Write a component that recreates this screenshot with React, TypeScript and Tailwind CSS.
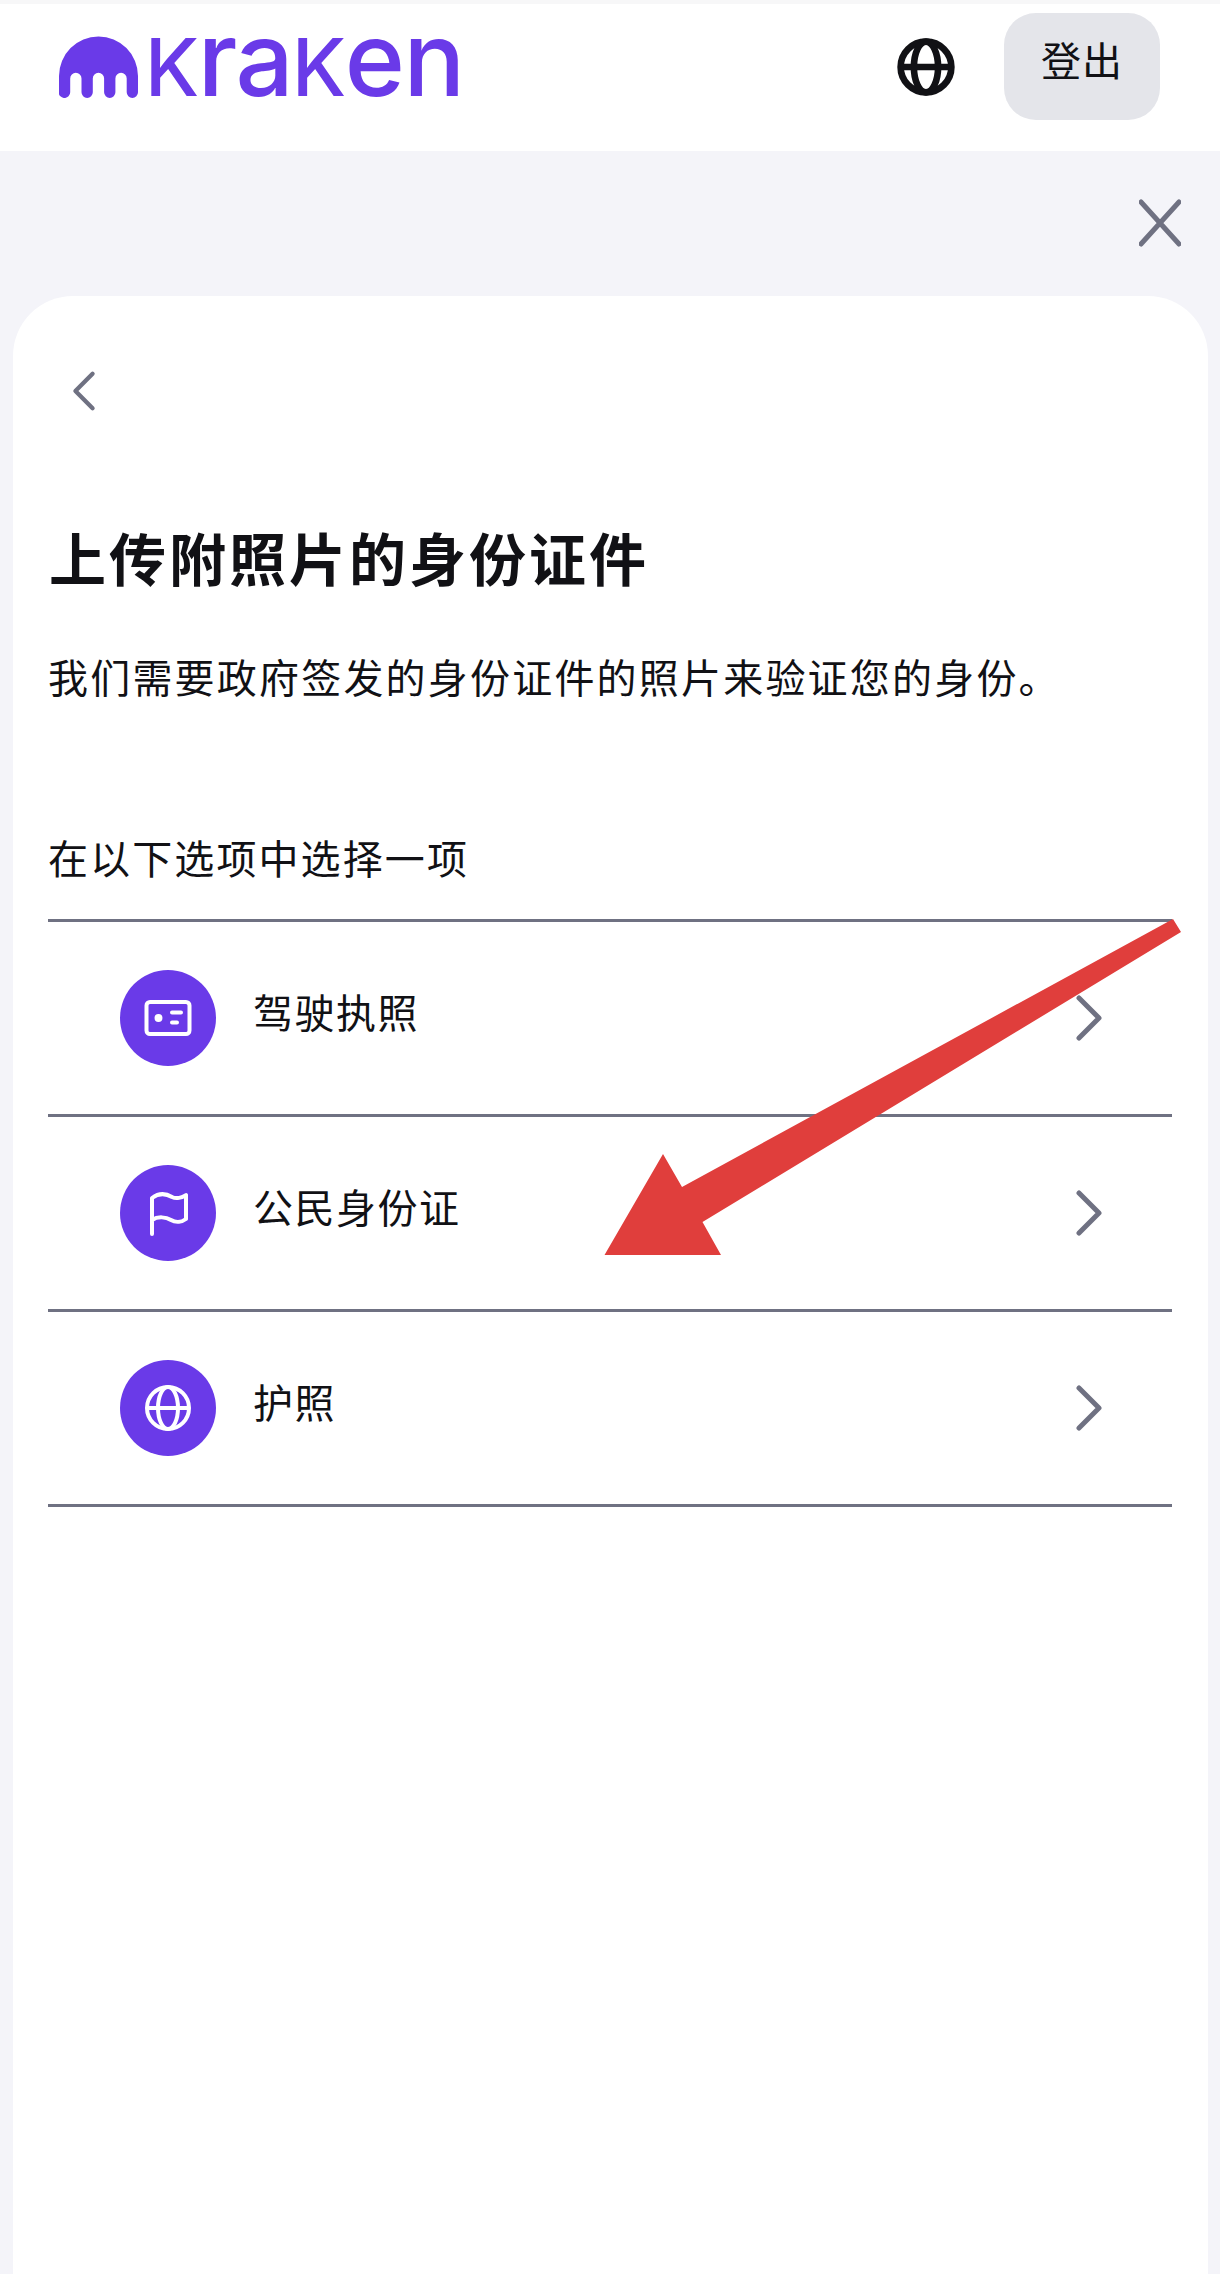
const font = { fontFamily: '"Noto Sans CJK SC", "Noto Sans", sans-serif' };

const Jellyfish = () => (
  <svg viewBox="0 0 79 62" className="w-[79px] h-[62px] shrink-0" fill="#6a3ae8">
    <path d="M0 40a39.5 39.5 0 0 1 79 0v16.3a5.65 5.65 0 0 1-11.3 0V42.5a5.65 5.65 0 0 0-11.3 0v13.8a5.65 5.65 0 0 1-11.3 0V42.5a5.65 5.65 0 0 0-11.3 0v13.8a5.65 5.65 0 0 1-11.3 0V42.5a5.65 5.65 0 0 0-11.3 0v13.8a5.65 5.65 0 0 1-11.5 0z" />
  </svg>
);

const IdIcon = () => (
  <svg viewBox="0 0 96 96" className="w-24 h-24" fill="none" stroke="white" strokeWidth="4" strokeLinecap="round">
    <rect x="26.5" y="32" width="43" height="32" rx="3.5" />
    <circle cx="38.5" cy="48" r="3.2" fill="white" strokeWidth="1.5" />
    <path d="M52 42.5h9M52 52.5h5" strokeWidth="4" />
  </svg>
);

const FlagIcon = () => (
  <svg viewBox="0 0 96 96" className="w-24 h-24" fill="none" stroke="white" strokeWidth="4" strokeLinecap="round" strokeLinejoin="round">
    <path d="M32 69V33C40 27 47 29 52 32C56 34 62 33 66 30V54C62 57 56 58 51 55C46 52 38 51 32 55" />
  </svg>
);

const GlobeIcon = ({ size, color, w }: { size: string; color: string; w: number }) => (
  <svg viewBox="0 0 96 96" className={size} fill="none" stroke={color} strokeWidth={w}>
    <circle cx="48" cy="48" r="21" />
    <ellipse cx="48" cy="48" rx="10" ry="21" />
    <path d="M27 48h42" />
  </svg>
);

const Chevron = () => (
  <svg viewBox="0 0 28 46" className="w-7 h-[46px]" fill="none" stroke="#6f7182" strokeWidth="5" strokeLinecap="round" strokeLinejoin="round">
    <path d="M4 3l20 20L4 43" />
  </svg>
);

const rows = [
  { label: '驾驶执照', icon: <IdIcon /> },
  { label: '公民身份证', icon: <FlagIcon /> },
  { label: '护照', icon: <GlobeIcon size="w-24 h-24" color="white" w={4} /> },
];

export default function App() {
  return (
    <div className="relative min-h-screen bg-[#f4f4f9] flex flex-col text-[#111115]" style={font}>
      {/* Header */}
      <header className="h-[151px] shrink-0 bg-white border-t-4 border-[#f7f7f8] flex items-start pl-[59px] pr-[60px]">
        <div className="flex items-start gap-[7px] mt-[32px]">
          <Jellyfish />
          <span
            className="flex items-baseline text-[#6a3ae8] font-medium leading-[62px] h-[62px] -mt-[9px] tracking-[-1.5px] scale-x-[0.985] origin-left"
            style={{ fontFamily: 'Inter, sans-serif' }}
          >
            <span className="uppercase text-[80px]">k</span>
            <span className="text-[104px]">ra</span>
            <span className="uppercase text-[80px]">k</span>
            <span className="text-[104px]">en</span>
          </span>
        </div>
        <div className="ml-auto flex items-center gap-[53px] mt-[9px]">
          <GlobeIcon size="w-[116px] h-[116px] -mr-[33px] -my-[5px]" color="#111115" w={5.5} />
          <button className="w-[156px] h-[107px] rounded-[32px] bg-[#e4e5ea] text-[40px] leading-[90px] pb-[15px] tracking-[1px]">
            登出
          </button>
        </div>
      </header>

      {/* Close row */}
      <div className="h-[145px] shrink-0 flex items-center justify-end pr-[39px]">
        <svg viewBox="0 0 42 48" className="w-[42px] h-12 -mt-[2px]" fill="none" stroke="#6f7182" strokeWidth="5" strokeLinecap="round">
          <path d="M2 3l38 42M40 3L2 45" />
        </svg>
      </div>

      {/* Card */}
      <main className="flex-1 mx-[13px] mr-[12px] bg-white rounded-t-[60px] pl-[36px] pr-[36px]">
        <div className="pt-[73px] pl-[23px] h-[140px]">
          <svg viewBox="0 0 28 46" className="w-6 h-[44px]" fill="none" stroke="#6f7182" strokeWidth="5" strokeLinecap="round" strokeLinejoin="round">
            <path d="M24 3L4 23l20 20" />
          </svg>
        </div>
        <h1 className="text-[57px] leading-[80px] font-semibold tracking-[3px] mt-[80px]">上传附照片的身份证件</h1>
        <p className="text-[40px] leading-[60px] tracking-[2.2px] mt-[50px] -ml-[1px]">
          我们需要政府签发的身份证件的照片来验证您的身份。
        </p>
        <p className="text-[40px] leading-[60px] tracking-[2.1px] mt-[121px] -ml-[1px]">在以下选项中选择一项</p>
        <div className="mt-[32px] -ml-[1px] border-t-[3px] border-[#6f7182]">
          {rows.map((row) => (
            <div key={row.label} className="h-[195px] border-b-[3px] border-[#6f7182] flex items-center pl-[72px] pr-[69px]">
              <div className="w-24 h-24 rounded-full bg-[#6a3ae8] mr-[37px] shrink-0">{row.icon}</div>
              <span className="text-[40px] leading-[60px] tracking-[1.5px] -mt-[14px]">{row.label}</span>
              <div className="ml-auto">
                <Chevron />
              </div>
            </div>
          ))}
        </div>
      </main>

      {/* Red annotation arrow */}
      <svg viewBox="0 0 585 345" className="absolute left-[600px] top-[915px] w-[585px] h-[345px]" fill="#e03e3c">
        <path d="M573 4L581 17L102.5 307L121 340H4.5L63 239L82 272Z" />
      </svg>
    </div>
  );
}
